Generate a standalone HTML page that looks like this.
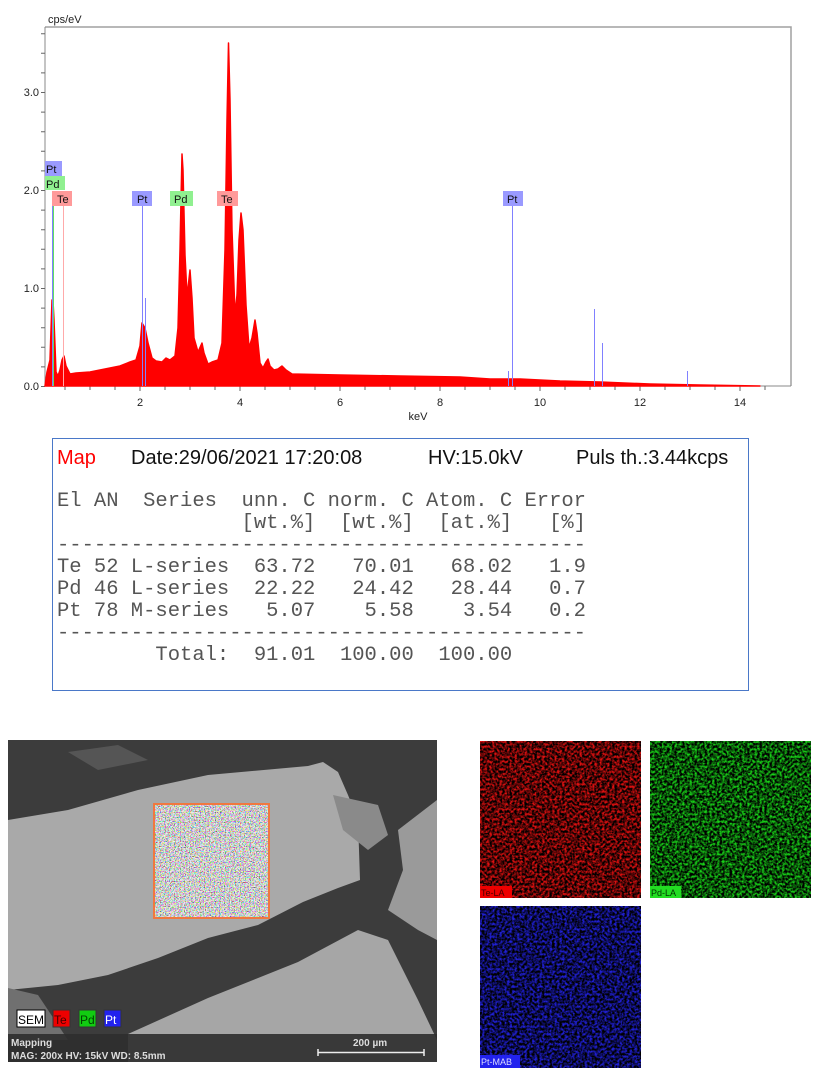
<!DOCTYPE html>
<html><head><meta charset="utf-8"><style>
body{margin:0;background:#fff;width:817px;height:1075px;overflow:hidden;position:relative;font-family:"Liberation Sans",sans-serif}
.abs{position:absolute}
.tb{position:absolute;left:52px;top:438px;width:695px;height:251px;border:1px solid #4a78c8}
.hd{position:absolute;top:8px;font-size:20px;color:#111}
pre{position:absolute;left:4px;top:52px;margin:0;font-family:"Liberation Mono",monospace;font-size:20.5px;line-height:22px;color:#555}
</style></head><body>
<svg class="abs" style="left:0;top:0" width="817" height="420">
<text x="48" y="23" font-size="11" fill="#222">cps/eV</text>
<path d="M45,27H791V386" fill="none" stroke="#a0a0a0" stroke-width="1.5"/>
<path d="M45,27V386H791" fill="none" stroke="#888" stroke-width="1"/>
<g stroke="#666" stroke-width="1">
<path d="M41,386.5h4M41,366.9h4M41,347.3h4M41,327.7h4M41,308.1h4M41,288.5h4M41,268.9h4M41,249.3h4M41,229.7h4M41,210.1h4M41,190.5h4M41,170.9h4M41,151.3h4M41,131.7h4M41,112.1h4M41,92.5h4M41,72.9h4M41,53.3h4M41,33.7h4"/>
<path d="M65,386v4M90,386v4M115,386v4M140,386v5M165,386v4M190,386v4M215,386v4M240,386v5M265,386v4M290,386v4M315,386v4M340,386v5M365,386v4M390,386v4M415,386v4M440,386v5M465,386v4M490,386v4M515,386v4M540,386v5M565,386v4M590,386v4M615,386v4M640,386v5M665,386v4M690,386v4M715,386v4M740,386v5M765,386v4"/>
</g>
<g font-size="11" fill="#222" text-anchor="end"><text x="39" y="390">0.0</text><text x="39" y="292">1.0</text><text x="39" y="194">2.0</text><text x="39" y="96">3.0</text></g>
<g font-size="11" fill="#222" text-anchor="middle"><text x="140" y="406">2</text><text x="240" y="406">4</text><text x="340" y="406">6</text><text x="440" y="406">8</text><text x="540" y="406">10</text><text x="640" y="406">12</text><text x="740" y="406">14</text><text x="418" y="420">keV</text></g>
<path fill="#ff0000" stroke="#ff0000" stroke-width="1.5" stroke-linejoin="round" d="M45,386 L47,372 L50,360 L52,300 L53,301 L54,320 L56,372 L58,376 L60,370 L62,360 L64,356 L66,366 L70,374 L76,373 L90,372 L110,368 L120,366 L130,362 L136,360 L140,346 L142,323 L145,328 L148,343 L152,358 L156,361 L162,362 L166,358 L170,360 L175,356 L178,328 L180,250 L181,200 L182,154 L183,170 L185,255 L187,295 L188,288 L190,270 L192,298 L194,338 L198,352 L202,343 L204,353 L208,364 L212,362 L218,360 L222,343 L225,250 L227,120 L228.5,43 L230,100 L232,230 L235,315 L237,295 L239,240 L241,213 L243,230 L246,305 L249,348 L252,338 L255,320 L257,333 L260,363 L263,368 L266,362 L268,359 L270,366 L274,370 L278,369 L282,366 L286,370 L292,374 L340,375 L400,376 L460,377 L490,379 L520,379 L560,381 L600,382 L650,384 L700,385 L760,386 Z"/>
<g stroke-width="1">
<path d="M52.5,206V386M142.5,206V386M512.5,206V386M594.5,309V386M602.5,343V386M687.5,371V386M508.5,371V386M145.5,298V386" stroke="#8080ff"/>
<path d="M53.5,206V386" stroke="#60e060"/>
<path d="M63.5,206V386" stroke="#ffaaaa"/>
</g>
<g font-size="11" fill="#111">
<rect x="45" y="161" width="17" height="15" fill="#9a9aff"/><text x="46" y="173">Pt</text>
<rect x="45" y="176" width="20" height="14" fill="#90f090"/><text x="46" y="188">Pd</text>
<rect x="52" y="191" width="20" height="15" fill="#ff9a9a"/><text x="57" y="203">Te</text>
<rect x="132" y="191" width="20" height="15" fill="#9a9aff"/><text x="137" y="203">Pt</text>
<rect x="170" y="191" width="23" height="15" fill="#90f090"/><text x="174" y="203">Pd</text>
<rect x="217" y="191" width="21" height="15" fill="#ff9a9a"/><text x="221" y="203">Te</text>
<rect x="503" y="191" width="20" height="15" fill="#9a9aff"/><text x="507" y="203">Pt</text>
</g>
</svg>
<div class="tb">
<span class="hd" style="left:4px;color:#f00">Map</span>
<span class="hd" style="left:78px">Date:29/06/2021 17:20:08</span>
<span class="hd" style="left:375px">HV:15.0kV</span>
<span class="hd" style="left:523px">Puls th.:3.44kcps</span>
<pre>El AN  Series  unn. C norm. C Atom. C Error
               [wt.%]  [wt.%]  [at.%]   [%]
-------------------------------------------
Te 52 L-series  63.72   70.01   68.02   1.9
Pd 46 L-series  22.22   24.42   28.44   0.7
Pt 78 M-series   5.07    5.58    3.54   0.2
-------------------------------------------
        Total:  91.01  100.00  100.00</pre>
</div>
<svg class="abs" style="left:8px;top:740px" width="429" height="322">
<defs>
<filter id="n1" x="0" y="0" width="1" height="1"><feTurbulence type="fractalNoise" baseFrequency="0.8" numOctaves="2" seed="3"/><feColorMatrix values="5 0 0 0 -1.8  0 5 0 0 -1.8  0 0 5 0 -1.8  0 0 0 0 1"/></filter>
</defs>
<rect width="429" height="322" fill="#3c3c3c"/>
<path d="M0,80 L60,70 L130,50 L200,35 L300,26 L315,22 L330,32 L340,55 L350,80 L352,140 L330,148 L295,162 L250,185 L200,198 L150,218 L100,235 L50,245 L0,250Z" fill="#a9a9a9"/>
<path d="M0,248 L30,255 L60,300 L0,300Z" fill="#707070"/>
<path d="M120,294 L200,258 L290,222 L350,190 L380,200 L410,260 L429,300 L429,322 L120,322Z" fill="#a6a6a6"/>
<path d="M325,55 L370,65 L380,95 L360,110 L335,90Z" fill="#8a8a8a"/>
<path d="M390,90 L429,60 L429,200 L410,190 L380,170 L395,130Z" fill="#9a9a9a"/>
<path d="M60,12 L110,5 L140,20 L90,30Z" fill="#555"/>
<rect x="146" y="64" width="115" height="114" fill="#ddd" stroke="#f07840" stroke-width="2"/>
<rect x="147" y="65" width="113" height="112" filter="url(#n1)" opacity="0.6"/>
<rect x="0" y="294" width="429" height="28" fill="#2e2e2e" opacity="0.9"/>
<g font-family="Liberation Sans" font-size="12">
<rect x="9" y="270" width="28" height="17" fill="#fff" stroke="#000"/><text x="10" y="284" fill="#000">SEM</text>
<rect x="45" y="270" width="17" height="17" fill="#e00" stroke="#333"/><text x="46" y="284" fill="#400">Te</text>
<rect x="71" y="270" width="17" height="17" fill="#1c1" stroke="#333"/><text x="72" y="284" fill="#040">Pd</text>
<rect x="96" y="270" width="17" height="17" fill="#22e" stroke="#333"/><text x="97" y="284" fill="#fff">Pt</text>
</g>
<g font-family="Liberation Sans" font-size="10" font-weight="bold" fill="#ddd">
<text x="3" y="306">Mapping</text><text x="3" y="319">MAG: 200x  HV: 15kV   WD: 8.5mm</text>
<text x="345" y="306">200 µm</text></g>
<path d="M310,309V316M310,312.5H416M416,309V316" stroke="#eee" stroke-width="1.5" fill="none"/>
</svg>
<svg class="abs" style="left:480px;top:741px" width="332" height="328">
<defs>
<filter id="nr" x="0" y="0" width="1" height="1"><feTurbulence type="fractalNoise" baseFrequency="0.4" numOctaves="2" seed="5"/><feColorMatrix values="0 0 0 0 0  0 0 0 0 0  0 0 0 0 0  -2.5 0 0 0 1.85"/></filter>
</defs>
<rect x="0" y="0" width="161" height="157" fill="#e01010"/>
<rect x="0" y="0" width="161" height="157" filter="url(#nr)"/>
<rect x="170" y="0" width="161" height="157" fill="#18d018"/>
<rect x="170" y="0" width="161" height="157" filter="url(#nr)"/>
<rect x="0" y="165" width="161" height="162" fill="#2020d8"/>
<rect x="0" y="165" width="161" height="162" filter="url(#nr)"/>
<g font-family="Liberation Sans" font-size="9">
<rect x="0" y="145" width="32" height="12" fill="#e00"/><text x="1" y="155" fill="#400">Te-LA</text>
<rect x="170" y="145" width="31" height="12" fill="#2d2"/><text x="171" y="155" fill="#030">Pd-LA</text>
<rect x="0" y="314" width="40" height="13" fill="#22e"/><text x="1" y="324" fill="#ddf">Pt-MAB</text>
</g>
</svg>
</body></html>
